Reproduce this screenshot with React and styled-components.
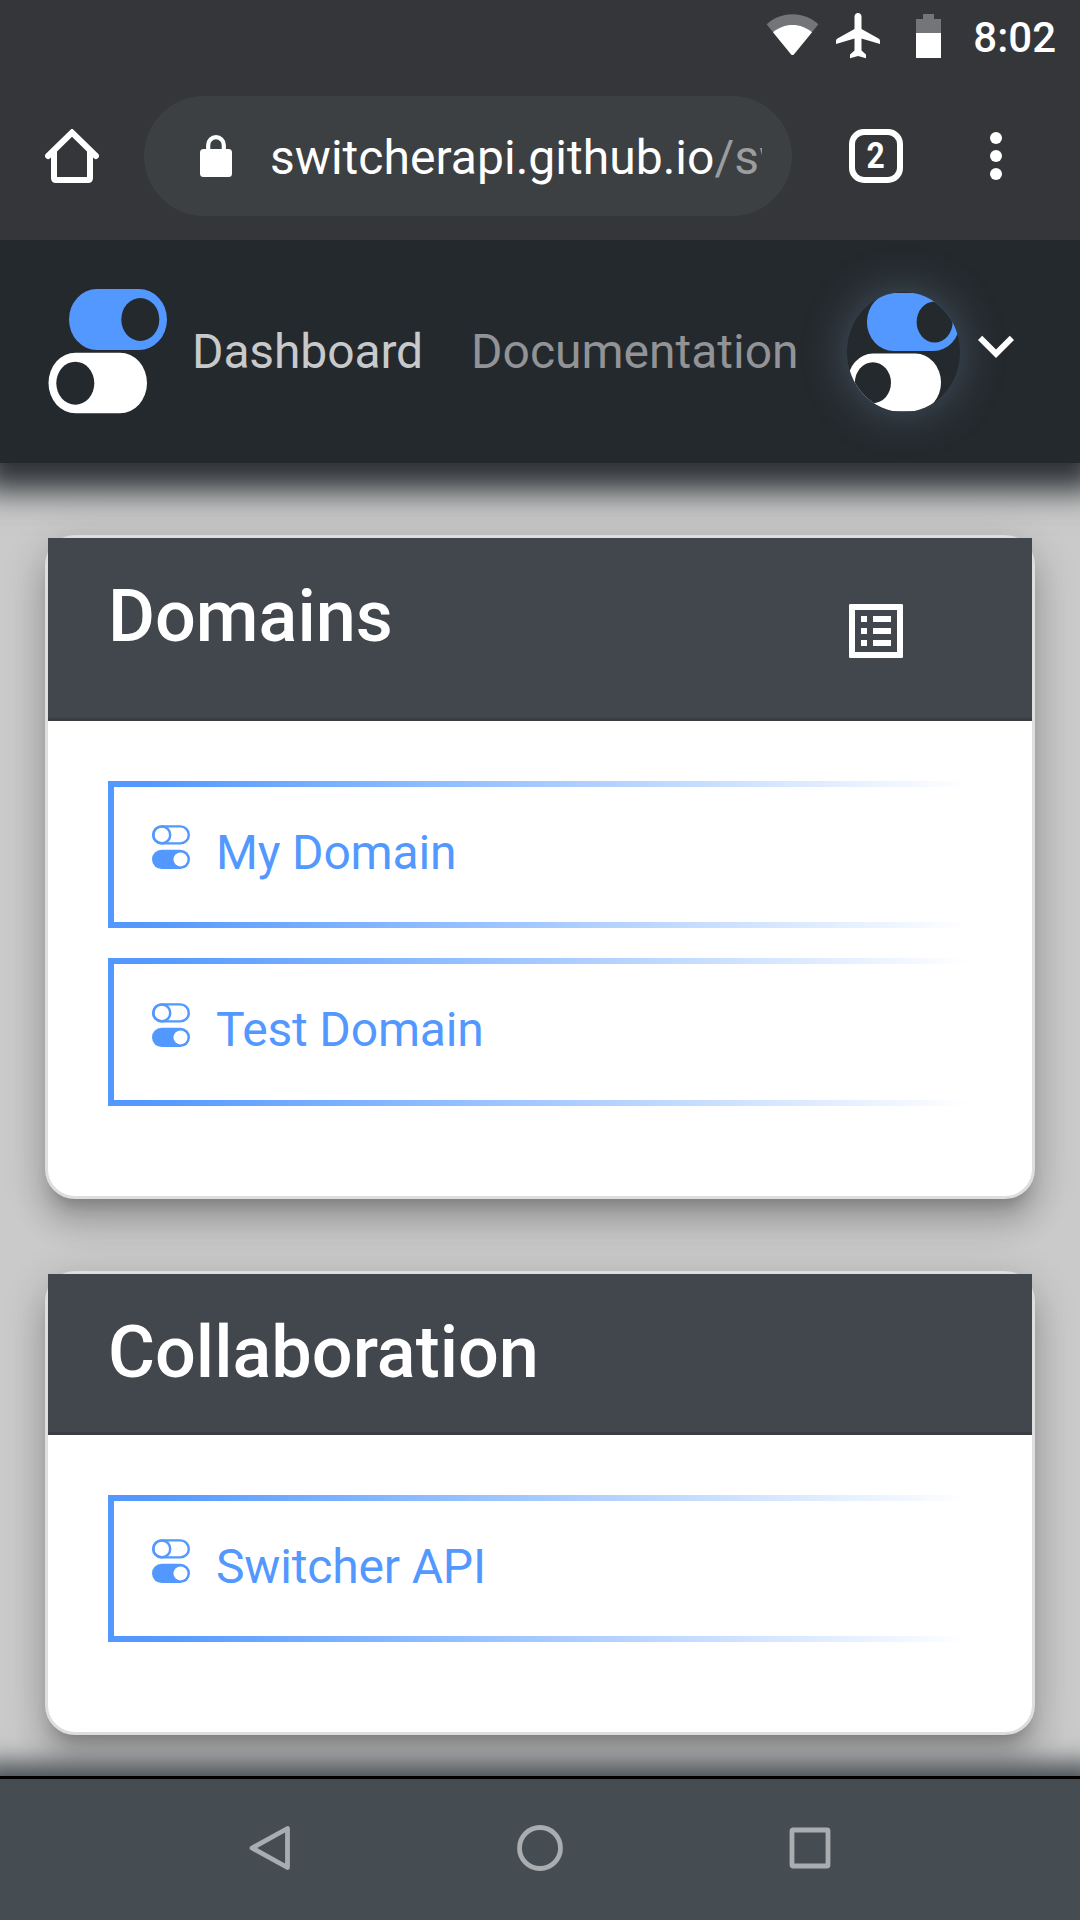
import React from "react";
import styled, { createGlobalStyle } from "styled-components";

const GlobalStyle = createGlobalStyle`
  *, *::before, *::after { box-sizing: border-box; }
  body {
    margin: 0;
    background: #454d53;
    font-family: Roboto, "Liberation Sans", sans-serif;
  }
  svg { display: block; flex: none; }
`;

const Screen = styled.div`
  width: 1080px;
  height: 1920px;
  display: flex;
  flex-direction: column;
  overflow: hidden;
`;

const BrowserChrome = styled.div`
  position: relative;
  z-index: 3;
  height: 240px;
  flex: none;
  background: #35363a;
  color: #fff;
`;

const StatusBar = styled.div`
  height: 72px;
  display: flex;
  justify-content: flex-end;
  align-items: flex-start;
  padding: 13px 24px 0 0;
`;

const StatusIcon = styled.div`
  margin-right: ${(p) => p.$gap}px;
`;

const Clock = styled.span`
  font-size: 42px;
  font-weight: 500;
  line-height: 50px;
`;

const Toolbar = styled.div`
  height: 168px;
  display: flex;
  align-items: center;
  padding: 0 72px 0 45px;
`;

const AddressBar = styled.div`
  width: 648px;
  height: 120px;
  margin: 0 57px 0 45px;
  padding-left: 56px;
  display: flex;
  align-items: center;
  gap: 38px;
  border-radius: 60px;
  background: #3c4043;
`;

const Url = styled.span`
  width: 492px;
  padding-top: 3px;
  overflow: hidden;
  white-space: nowrap;
  font-size: 48px;
  line-height: 60px;
  letter-spacing: 0.03px;
`;

const UrlPath = styled.span`
  color: #9b9d9f;
`;

const TabCounter = styled.div`
  width: 54px;
  height: 54px;
  margin-right: 87px;
  border: 6px solid #fff;
  border-radius: 15px;
  display: flex;
  align-items: center;
  justify-content: center;
  font-size: 37px;
  font-weight: 700;
  line-height: 42px;
`;

const TabNumber = styled.span`
  transform: scaleX(0.86);
`;

const Page = styled.div`
  flex: 1;
  min-height: 0;
  background: #cacaca;
`;

const AppHeader = styled.header`
  position: relative;
  z-index: 2;
  height: 223px;
  display: flex;
  align-items: center;
  padding: 0 48px;
  background: #24292d;
  box-shadow: 0 8px 30px 20px #2e3237;
`;

const NavLink = styled.a`
  width: ${(p) => p.$width}px;
  font-size: 48px;
  line-height: 72px;
  letter-spacing: ${(p) => (p.$active ? "-0.12px" : "0")};
  color: ${(p) => (p.$active ? "#c8c9ca" : "#929396")};
`;

const Brand = styled.div`
  margin: 0 25px 2px 0;
`;

const Avatar = styled.div`
  width: 113px;
  height: 120px;
  border-radius: 50%;
  overflow: hidden;
  background: #24292d;
  box-shadow: 0 0 45px rgba(120, 150, 185, 0.4);
`;

const MenuToggle = styled.div`
  margin-bottom: 11px;
`;

const Content = styled.main`
  display: flex;
  flex-direction: column;
  gap: 72px;
  padding: 72px 45px 0;
`;

const Card = styled.section`
  background: #fff;
  border: 3px solid #dedede;
  border-radius: 30px;
  box-shadow: 0 15px 15px -9px rgba(0, 0, 0, 0.2),
    0 24px 30px 3px rgba(0, 0, 0, 0.14), 0 9px 42px 6px rgba(0, 0, 0, 0.12);
`;

const CardHeader = styled.div`
  display: flex;
  justify-content: space-between;
  align-items: flex-start;
  padding: 37px 60px 37px;
  background: #42464d;
  border-bottom: 3px solid #3b3d42;
`;

const CardTitle = styled.h2`
  margin: 0;
  color: #fff;
  font-size: 72px;
  font-weight: 500;
  line-height: 84px;
`;

const CardAction = styled.div`
  margin: 20px 60px 14px 0;
`;

const CardBody = styled.div`
  padding: 60px;
`;

const Item = styled.a`
  height: 147.3px;
  margin-bottom: 30px;
  padding: 0 0 3.2px 38px;
  display: flex;
  align-items: center;
  gap: 26px;
  border: 6px solid #5298ff;
  border-right: 0;
  border-image: linear-gradient(to right, #5298ff 4%, rgba(82, 152, 255, 0) 99%) 6;
  color: #5298ff;
  font-size: 48px;
  line-height: 60px;
  letter-spacing: -0.16px;
`;

const ItemIcon = styled.div`
  align-self: flex-start;
  margin-top: 38.3px;
`;

const SystemNav = styled.nav`
  position: relative;
  z-index: 2;
  height: 144px;
  flex: none;
  display: flex;
  justify-content: center;
  align-items: center;
  gap: 223px;
  padding-bottom: 3px;
  background: #454d53;
  border-top: 3px solid #000;
  box-shadow: 0 7px 24px 20px #454d53;
`;

const WifiIcon = () => (
  <svg width="53" height="43" viewBox="0 0 53 43">
    <path d="M0.6 11.3C7 5.5 16 1.3 26.5 1.3S46 5.5 52.4 11.3L27.8 41.4q-1.3 1.4-2.6 0z" fill="#747578" />
    <path d="M7 19.2C12.5 14.7 19 12 26.5 12S40.500 14.700 46 19.200L27.800 41.400q-1.300 1.400-2.600 0z" fill="#fff" />
  </svg>
);

const AirplaneIcon = () => (
  <svg width="44" height="46" viewBox="0 0 44 46">
    <path
      d="M22 0c2 0 3.500 1.600 3.500 3.600V16L42.500 25.600Q44 26.500 44 28v3L25.500 25.500V37.500L30 41.500V45.300L22 43 14 45.300V41.500L18.500 37.500V25.500L0 31V28Q0 26.500 1.500 25.600L18.500 16V3.600C18.500 1.600 20 0 22 0z"
      fill="#fff"
    />
  </svg>
);

const BatteryIcon = () => (
  <svg width="25" height="45" viewBox="0 0 25 45">
    <path d="M7 1h11v5h7v14H0V6h7z" fill="#747578" />
    <path d="M0 20h25v25H0z" fill="#fff" />
  </svg>
);

const HomeIcon = () => (
  <svg width="54" height="54" viewBox="0 0 54 54" fill="none" stroke="#fff" strokeWidth="6">
    <path d="M3 27L27 3.500 51 27" strokeLinecap="round" />
    <path d="M9 21V49q0 2 2 2H43q2 0 2-2V21" />
  </svg>
);

const LockIcon = () => (
  <svg width="32" height="42" viewBox="0 0 32 42">
    <rect y="14" width="32" height="28" rx="3.500" fill="#fff" />
    <path d="M8.200 16V10a7.800 7.800 0 0 1 15.600 0v6" fill="none" stroke="#fff" strokeWidth="4.200" />
  </svg>
);

const MoreIcon = () => (
  <svg width="12" height="48" viewBox="0 0 12 48" fill="#fff">
    <circle cx="6" cy="6" r="6" />
    <circle cx="6" cy="24" r="6" />
    <circle cx="6" cy="42" r="6" />
  </svg>
);

const SwitcherLogo = ({ width, height }) => (
  <svg width={width} height={height} viewBox="0 0 119 126" preserveAspectRatio="none">
    <rect x="21" y="1" width="98" height="61" rx="28" ry="30.500" fill="#5298ff" />
    <ellipse cx="92.300" cy="31.500" rx="19" ry="21.500" fill="#24292d" />
    <rect x="0.500" y="64.700" width="98.500" height="60.600" rx="27" ry="30.300" fill="#fff" />
    <ellipse cx="27.300" cy="95.200" rx="19" ry="21.500" fill="#24292d" />
  </svg>
);

const ChevronIcon = () => (
  <svg width="72" height="72" viewBox="0 0 24 24" fill="#fff">
    <path d="M16.590 8.590L12 13.170 7.410 8.590 6 10l6 6 6-6z" />
  </svg>
);

const ListIcon = () => (
  <svg width="72" height="72" viewBox="0 0 24 24" fill="#fff">
    <path
      fillRule="evenodd"
      d="M3.400 3h17.200q.4 0 .4.400v17.200q0 .4-.4.400H3.400q-.4 0-.4-.4V3.400q0-.4.400-.4zM5 5v14h14V5z"
    />
    <path d="M7 7h2v2H7zM11 7h6v2h-6zM7 11h2v2H7zM11 11h6v2h-6zM7 15h2v2H7zM11 15h6v2h-6z" />
  </svg>
);

const TogglesIcon = () => (
  <svg width="38" height="44" viewBox="0 0 38 44">
    <g fill="none" stroke="#5298ff" strokeWidth="2.400">
      <rect x="1.200" y="1.400" width="35.600" height="17" rx="8.500" />
      <circle cx="9.800" cy="9.900" r="8.400" />
    </g>
    <rect y="24.700" width="38" height="19.300" rx="9.650" fill="#5298ff" />
    <circle cx="28.500" cy="34.400" r="7" fill="#fff" />
  </svg>
);

const BackIcon = () => (
  <svg width="46" height="48" viewBox="0 0 46 48">
    <path d="M40.500 4.500V43.500L5 24z" fill="none" stroke="#a9adb0" strokeWidth="4.800" strokeLinejoin="round" />
  </svg>
);

const CircleIcon = () => (
  <svg width="48" height="48" viewBox="0 0 48 48">
    <circle cx="24" cy="24" r="20.500" fill="none" stroke="#a9adb0" strokeWidth="4.800" />
  </svg>
);

const SquareIcon = () => (
  <svg width="46" height="48" viewBox="0 0 46 48">
    <rect x="5" y="6" width="36" height="36" rx="1" fill="none" stroke="#a9adb0" strokeWidth="4.800" />
  </svg>
);

const cards = [
  { title: "Domains", action: true, items: ["My Domain", "Test Domain"] },
  { title: "Collaboration", action: false, items: ["Switcher API"] },
];

export default function App() {
  return (
    <>
      <GlobalStyle />
      <Screen>
        <BrowserChrome>
          <StatusBar>
            <StatusIcon $gap={17}><WifiIcon /></StatusIcon>
            <StatusIcon $gap={36}><AirplaneIcon /></StatusIcon>
            <StatusIcon $gap={32}><BatteryIcon /></StatusIcon>
            <Clock>8:02</Clock>
          </StatusBar>
          <Toolbar>
            <HomeIcon />
            <AddressBar>
              <LockIcon />
              <Url>
                switcherapi.github.io<UrlPath>/sw</UrlPath>
              </Url>
            </AddressBar>
            <TabCounter><TabNumber>2</TabNumber></TabCounter>
            <MoreIcon />
          </Toolbar>
        </BrowserChrome>

        <Page>
          <AppHeader>
            <Brand><SwitcherLogo width={119} height={126} /></Brand>
            <NavLink $active $width={279}>Dashboard</NavLink>
            <NavLink $width={376}>Documentation</NavLink>
            <Avatar><SwitcherLogo width={113} height={120} /></Avatar>
            <MenuToggle><ChevronIcon /></MenuToggle>
          </AppHeader>
          <Content>
            {cards.map((card) => (
              <Card key={card.title}>
                <CardHeader>
                  <CardTitle>{card.title}</CardTitle>
                  {card.action && <CardAction><ListIcon /></CardAction>}
                </CardHeader>
                <CardBody>
                  {card.items.map((name) => (
                    <Item key={name}>
                      <ItemIcon><TogglesIcon /></ItemIcon>
                      {name}
                    </Item>
                  ))}
                </CardBody>
              </Card>
            ))}
          </Content>
        </Page>

        <SystemNav>
          <BackIcon />
          <CircleIcon />
          <SquareIcon />
        </SystemNav>
      </Screen>
    </>
  );
}
